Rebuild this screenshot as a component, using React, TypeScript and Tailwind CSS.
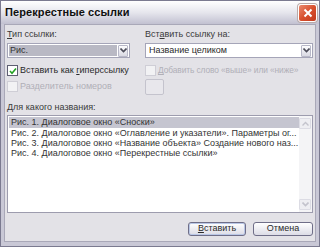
import React from "react";

const font = { fontFamily: '"Liberation Sans", Arial, sans-serif' };

function Chevron({ color = "#4d4d5a" }: { color?: string }) {
  return (
    <svg width="7" height="5" viewBox="0 0 7 5">
      <path d="M0.5 0.5 L3.5 3.5 L6.5 0.5" fill="none" stroke={color} strokeWidth="1.6" />
    </svg>
  );
}

function ArrowBtn() {
  return (
    <div className="w-[10px] h-[12px] flex items-center justify-center rounded-[1px] border border-[#b8b8c8] bg-gradient-to-b from-[#fdfdfe] to-[#d9d9e3]">
      <Chevron />
    </div>
  );
}

function CheckBox({ checked, disabled }: { checked?: boolean; disabled?: boolean }) {
  return (
    <div
      className={
        "w-[11px] h-[11px] shrink-0 flex items-center justify-center border " +
        (disabled ? "border-[#cfced6] bg-[#f2f2f4]" : "border-[#5e5e72] bg-white")
      }
    >
      {checked && (
        <svg width="8" height="8" viewBox="0 0 8 8">
          <path d="M1 4 L3 6.2 L7 1.5" fill="none" stroke="#21a121" strokeWidth="1.6" />
        </svg>
      )}
    </div>
  );
}

export default function App() {
  return (
    <div
      className="w-[320px] h-[247px] flex flex-col bg-[#c9c8d6] border border-[#7b7a90] text-[9px] text-[#2a2a2a] overflow-hidden"
      style={font}
    >
      {/* Title bar */}
      <div className="h-[23px] shrink-0 flex items-center justify-between pl-[4px] pr-[2px] bg-gradient-to-b from-[#ffffff] via-[#e6e6ed] to-[#c2c1d1]">
        <span className="text-[11px] font-bold tracking-[0.1px] text-[#101010]">Перекрестные ссылки</span>
        <div className="w-[19px] h-[18px] rounded-[3px] border border-white bg-gradient-to-br from-[#e98a6f] via-[#d8502e] to-[#c3391d] flex items-center justify-center shadow-[0_0_0_1px_#b9aaa8]">
          <svg width="10" height="10" viewBox="0 0 10 10">
            <path d="M1.5 1.5 L8.5 8.5 M8.5 1.5 L1.5 8.5" stroke="white" strokeWidth="2" />
          </svg>
        </div>
      </div>

      {/* Body */}
      <div className="flex-1 mx-[3px] mb-[4px] bg-[#e3e2e7] border border-[#a9a8b8] px-[2px] pt-[4px] flex flex-col">
        <div className="flex gap-[15px]">
          {/* Left column */}
          <div className="w-[123px] flex flex-col">
            <div className="h-[10px] leading-[10px] text-[#3a3a3a]">
              <span className="underline">Т</span>ип ссылки:
            </div>
            <div className="mt-[4px] h-[15px] border border-[#a5a5b8] bg-white flex items-center p-[1px] gap-[1px]">
              <div className="flex-1 h-full bg-[#b9b9c4] flex items-center pl-[1px] text-[#333]">Рис.</div>
              <ArrowBtn />
            </div>
            <div className="mt-[7px] flex items-center gap-[2px] h-[11px]">
              <CheckBox checked />
              <span>
                Вставить как <span className="underline">г</span>иперссылку
              </span>
            </div>
            <div className="mt-[5px] flex items-center gap-[2px] h-[11px] text-[#b0afb7]">
              <CheckBox disabled />
              <span>Разделитель номеров</span>
            </div>
          </div>
          {/* Right column */}
          <div className="flex-1 flex flex-col">
            <div className="h-[10px] leading-[10px] text-[#3a3a3a]">
              Вст<span className="underline">а</span>вить ссылку на:
            </div>
            <div className="mt-[4px] h-[15px] border border-[#a5a5b8] bg-white flex items-center p-[1px] gap-[1px]">
              <div className="flex-1 h-full flex items-center pl-[2px]">Название целиком</div>
              <ArrowBtn />
            </div>
            <div className="mt-[7px] flex items-center gap-[2px] h-[11px] text-[#b0afb7]">
              <CheckBox disabled />
              <span className="whitespace-nowrap text-[8.4px] tracking-[-0.1px]">
                <span className="underline">Д</span>обавить слово «выше» или «ниже»
              </span>
            </div>
            <div className="mt-[3px] w-[19px] h-[16px] rounded-[2px] border border-[#c4c3cd] bg-[#e8e7ec]" />
          </div>
        </div>

        <div className="mt-[7px] h-[10px] leading-[10px] text-[#3a3a3a]">
          <span className="underline">Д</span>ля какого названия:
        </div>
        <div className="mt-[3px] h-[98px] border border-[#9d9cae] bg-white flex">
          <div className="flex-1 flex flex-col pt-[1px] pl-[1px] overflow-hidden text-[#333]">
            <div className="h-[11px] leading-[11px] bg-[#c5c5d0] pl-[2px] whitespace-nowrap">
              Рис. 1. Диалоговое окно «Сноски»
            </div>
            <div className="h-[10px] leading-[10px] pl-[2px] whitespace-nowrap">
              Рис. 2. Диалоговое окно «Оглавление и указатели». Параметры ог...
            </div>
            <div className="h-[10px] leading-[10px] pl-[2px] whitespace-nowrap">
              Рис. 3. Диалоговое окно «Название объекта» Создание нового наз...
            </div>
            <div className="h-[10px] leading-[10px] pl-[2px] whitespace-nowrap">
              Рис. 4. Диалоговое окно «Перекрестные ссылки»
            </div>
          </div>
          <div className="w-[13px] bg-[#f4f4f6] flex flex-col justify-between py-[2px] pr-[1px]">
            <div className="h-[11px] rounded-[1px] border border-[#dcdce4] bg-[#eeeef2] flex items-center justify-center">
              <svg width="7" height="5" viewBox="0 0 7 5">
                <path d="M0.5 4.5 L3.5 1.5 L6.5 4.5" fill="none" stroke="#c3c3cc" strokeWidth="1.4" />
              </svg>
            </div>
            <div className="h-[11px] rounded-[1px] border border-[#dcdce4] bg-[#eeeef2] flex items-center justify-center">
              <Chevron color="#c3c3cc" />
            </div>
          </div>
        </div>

        <div className="mt-[9px] flex justify-end gap-[7px]">
          <div className="w-[58px] h-[14px] rounded-[3px] border border-[#6f6e88] bg-gradient-to-b from-white to-[#dcdce6] shadow-[inset_0_0_0_1px_#b9c7e6] flex items-center justify-center">
            <span>
              <span className="underline">В</span>ставить
            </span>
          </div>
          <div className="w-[60px] h-[14px] rounded-[3px] border border-[#6f6e88] bg-gradient-to-b from-white to-[#dcdce6] flex items-center justify-center">
            Отмена
          </div>
        </div>
      </div>
    </div>
  );
}
